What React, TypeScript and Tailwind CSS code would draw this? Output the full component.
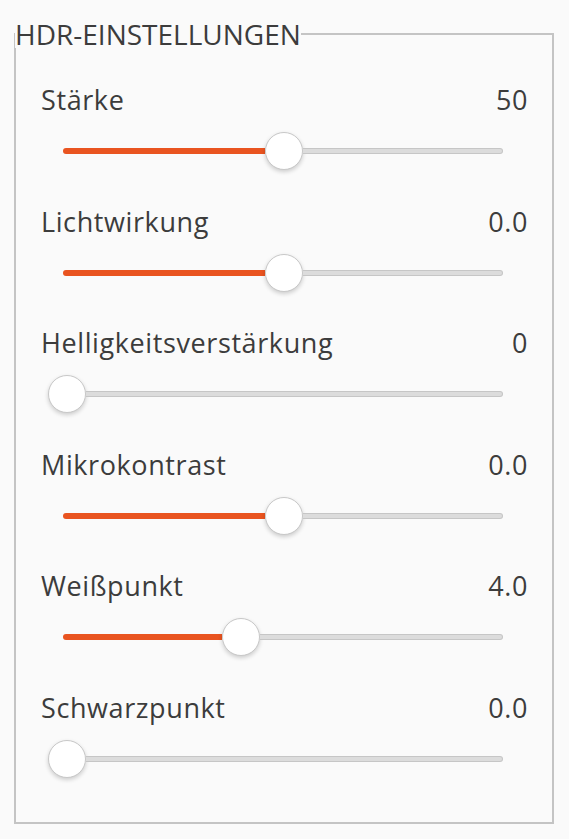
type Setting = {
  label: string;
  value: string;
  /** thumb position, 0..1 */
  pos: number;
};

const settings: Setting[] = [
  { label: "Stärke", value: "50", pos: 0.5 },
  { label: "Lichtwirkung", value: "0.0", pos: 0.5 },
  { label: "Helligkeitsverstärkung", value: "0", pos: 0 },
  { label: "Mikrokontrast", value: "0.0", pos: 0.5 },
  { label: "Weißpunkt", value: "4.0", pos: 0.4 },
  { label: "Schwarzpunkt", value: "0.0", pos: 0 },
];

// distance the thumb can travel along the track
const TRAVEL = 434;

const Slider = ({ pos }: { pos: number }) => {
  const filled = pos * TRAVEL - 15;
  return (
    <div className="ml-[32px] mt-[17px] flex h-[38px] w-[472px] items-center">
      {filled > 0 && (
        <div className="ml-[15px] h-[6px] rounded-l-full bg-[#e95420]" style={{ width: filled }} />
      )}
      <div className="h-[38px] w-[38px] shrink-0 rounded-full border-[1.5px] border-[#c8c8c8] bg-white shadow-[0_2px_4px_rgba(0,0,0,0.18)]" />
      <div className="mr-[17px] h-[6px] flex-1 rounded-r-full border border-l-0 border-[#c6c6c6] bg-[#dcdcdc]" />
    </div>
  );
};

const Row = ({ s }: { s: Setting }) => (
  <div className="h-[121.5px]">
    <div className="flex h-[30px] items-center justify-between pl-[25px] pr-[24px] text-[27px] leading-[30px] tracking-[0.6px] text-[#3c3c3c]">
      <span>{s.label}</span>
      <span>{s.value}</span>
    </div>
    <Slider pos={s.pos} />
  </div>
);

export default function App() {
  return (
    <div
      className="min-h-[839px] bg-[#fafafa] pl-[14px] pt-[20px]"
      style={{ fontFamily: '"Open Sans", "Noto Sans", sans-serif' }}
    >
      <fieldset className="h-[804px] w-[540px] border-2 border-[#c4c4c4] pt-[37px]">
        <legend className="-ml-[1px] text-[28px] leading-[28px] text-[#3c3c3c]">HDR-EINSTELLUNGEN</legend>
        {settings.map((s) => (
          <Row key={s.label} s={s} />
        ))}
      </fieldset>
    </div>
  );
}
